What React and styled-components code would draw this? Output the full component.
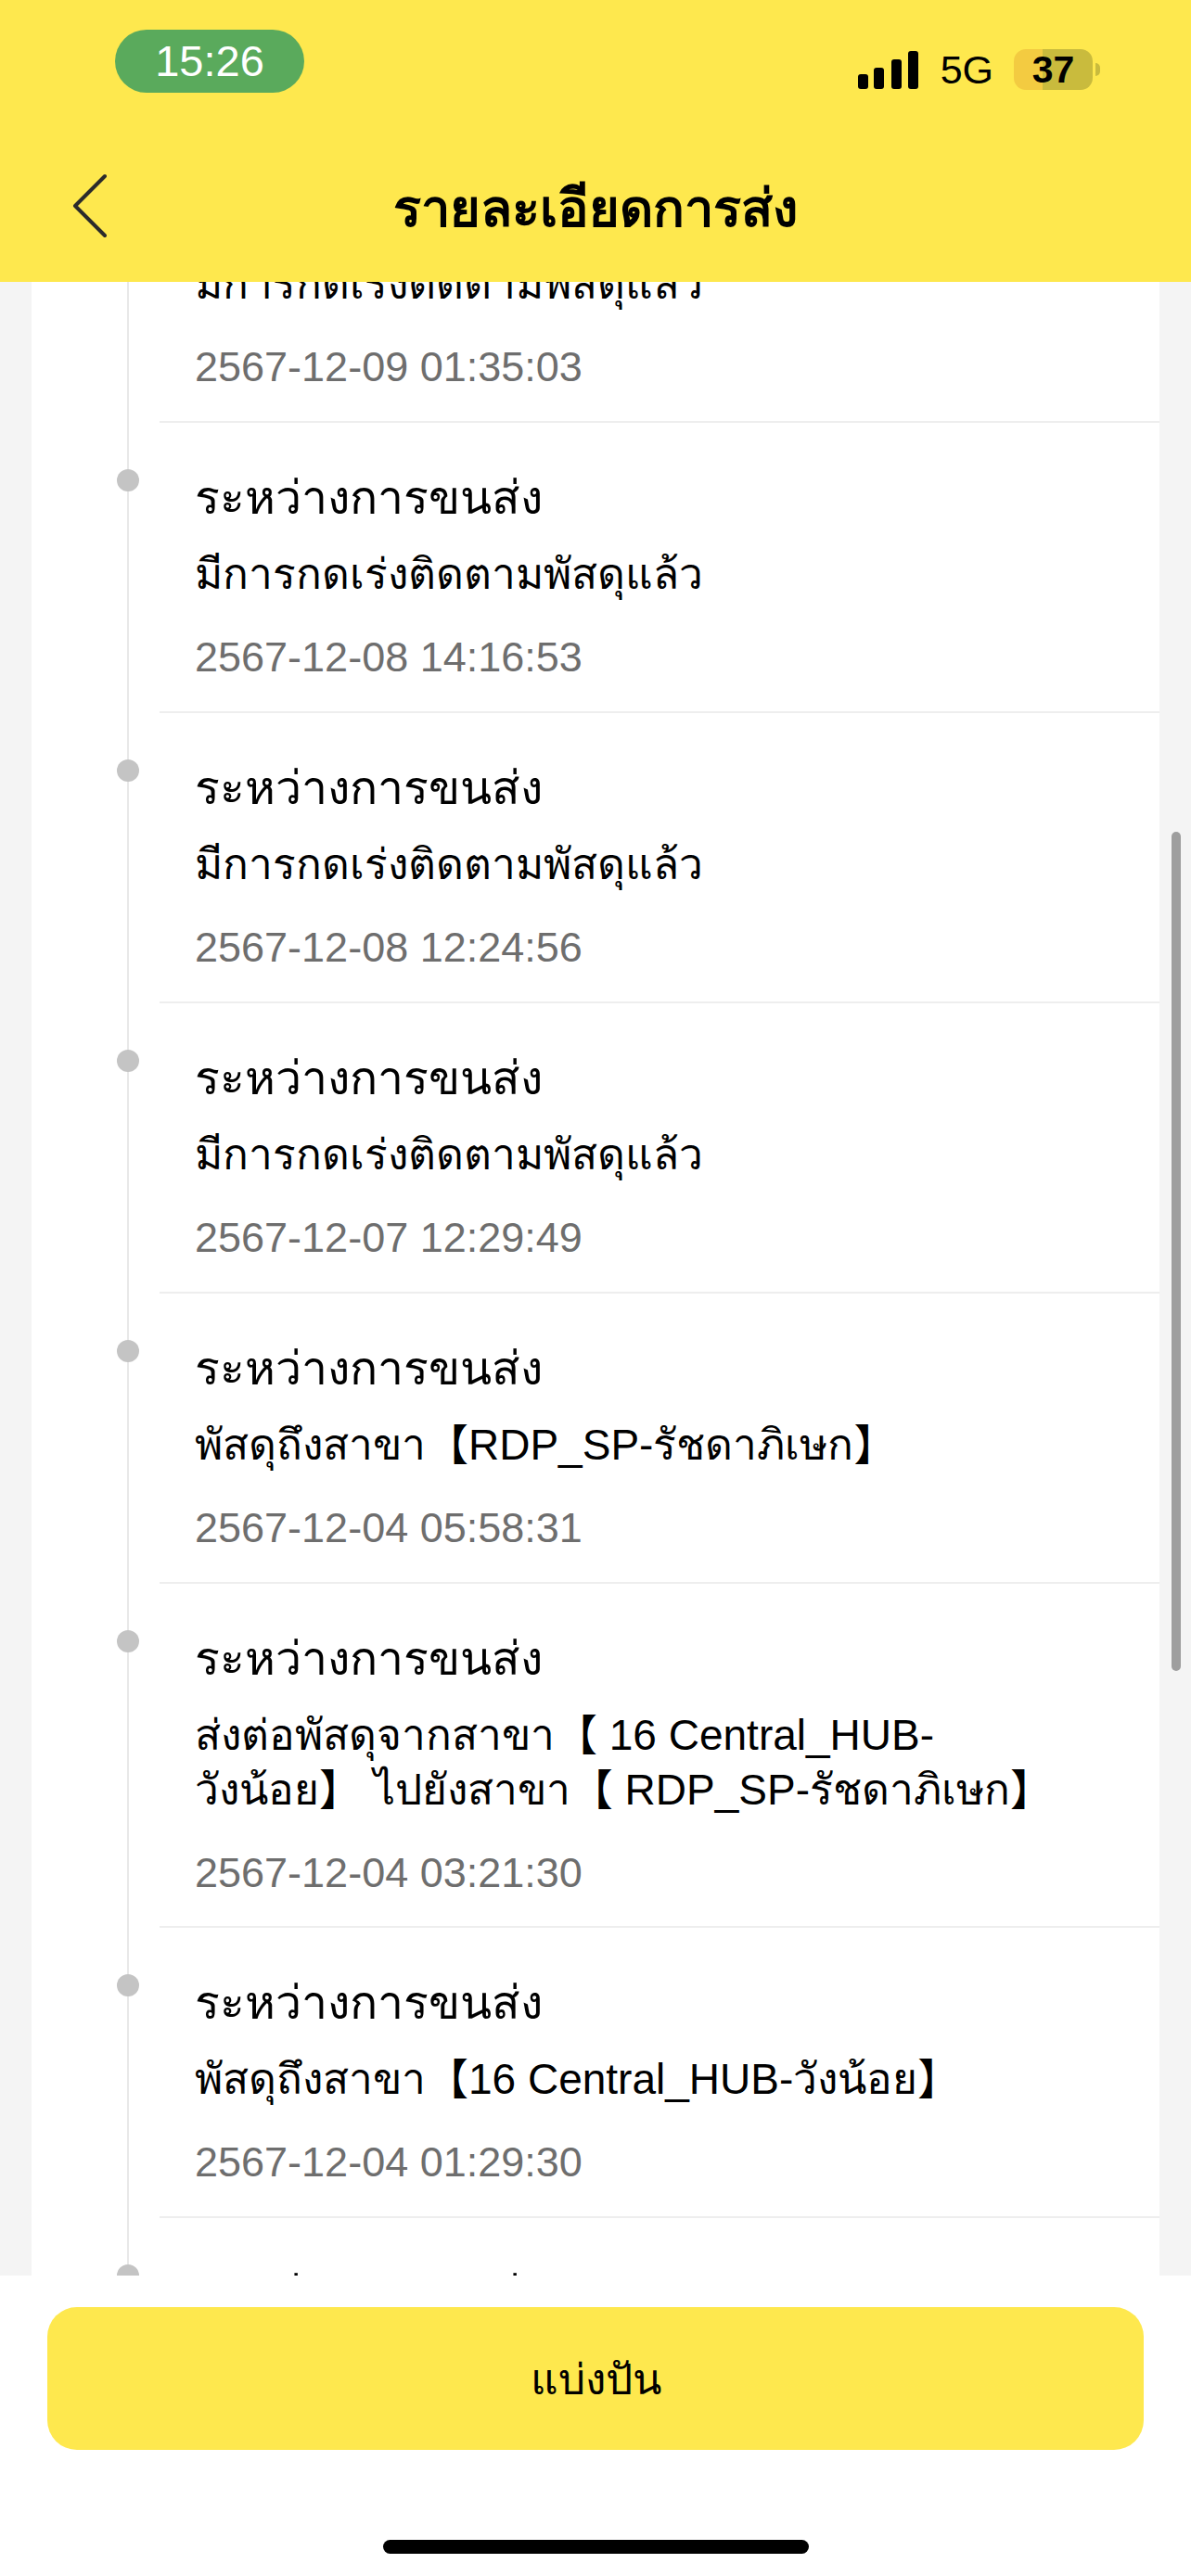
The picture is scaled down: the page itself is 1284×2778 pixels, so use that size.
import React from 'react';
import styled, { createGlobalStyle } from 'styled-components';

const GlobalStyle = createGlobalStyle`
  * {
    box-sizing: border-box;
  }

  html, body {
    margin: 0;
    padding: 0;
    background: #fff;
    font-family: "Liberation Sans", "Noto Sans", "Noto Sans CJK JP", sans-serif;
  }
`

const Page = styled.div`
  width: 1284px;
  height: 2778px;
  display: flex;
  flex-direction: column;
  overflow: hidden;
  background: #fff;
`

const Header = styled.header`
  height: 304px;
  flex: none;
  background: #fee84e;
  display: flex;
  flex-direction: column;
  position: relative;
  z-index: 2;
`

const StatusBar = styled.div`
  height: 100px;
  padding: 32px 98px 0 124px;
  display: flex;
  justify-content: space-between;
  align-items: flex-start;
`

const TimePill = styled.div`
  width: 204px;
  height: 68px;
  border-radius: 34px;
  background: #5aaa5c;
  color: #fff;
  font-size: 47px;
  line-height: 68px;
  text-align: center;
`

const StatusRight = styled.div`
  display: flex;
  align-items: center;
  height: 44px;
  margin-top: 21px;
`

const NetworkLabel = styled.span`
  font-size: 43px;
  line-height: 44px;
  margin: 0 22px 0 24px;
  color: #000;
`

const Battery = styled.div`
  width: 85px;
  height: 44px;
  border-radius: 13px;
  background: linear-gradient(to right, #f3cb41 37%, #c9bb3d 37%);
  color: #000;
  font-size: 41px;
  font-weight: 700;
  line-height: 44px;
  text-align: center;
`

const BatteryTip = styled.div`
  width: 5px;
  height: 14px;
  margin-left: 3px;
  border-radius: 0 7px 7px 0;
  background: #c9bb3d;
`

const NavBar = styled.div`
  flex: 1;
  display: flex;
  align-items: center;
  justify-content: center;
  position: relative;
  padding-top: 44px;
`

const BackButton = styled.button`
  position: absolute;
  left: 76px;
  top: 87px;
  width: 42px;
  height: 70px;
  padding: 0;
  border: 0;
  background: none;
`

const Title = styled.h1`
  margin: 0;
  font-size: 56px;
  font-weight: 700;
  color: #000;
`

const Content = styled.main`
  flex: 1;
  min-height: 0;
  overflow: hidden;
  background: #f4f4f4;
  padding: 0 34px;
  position: relative;
`

const Card = styled.div`
  background: #fff;
  margin-top: -161px;
`

const Row = styled.div`
  display: flex;
`

const Rail = styled.div`
  width: 138px;
  flex: none;
  position: relative;

  &::before {
    content: '';
    position: absolute;
    left: 103px;
    top: 0;
    bottom: 0;
    width: 2px;
    background: #e8e8e8;
  }

  &::after {
    content: '';
    position: absolute;
    left: 92px;
    top: 50px;
    width: 24px;
    height: 24px;
    border-radius: 50%;
    background: #c4c4c4;
  }
`

const RowBody = styled.div`
  flex: 1;
  min-width: 0;
  padding: 49px 100px 0 38px;
  height: ${props => props.$tall ? 371 : 313}px;
  border-bottom: 2px solid #eeeeee;
`

const RowTitle = styled.div`
  font-size: 50px;
  line-height: 64px;
  color: #000;
`

const RowText = styled.div`
  margin-top: 21px;
  font-size: 46px;
  line-height: 59px;
  color: #000;
`

const RowDate = styled.div`
  margin-top: 35px;
  font-size: 45px;
  line-height: 50px;
  color: #6e6e6e;
`

const ScrollThumb = styled.div`
  position: absolute;
  left: 1263px;
  top: 593px;
  width: 10px;
  height: 905px;
  border-radius: 5px;
  background: #9e9e9e;
`

const Footer = styled.footer`
  height: 324px;
  flex: none;
  background: #fff;
  padding-top: 34px;
  position: relative;
  z-index: 2;
  display: flex;
  flex-direction: column;
  align-items: center;
`

const ShareButton = styled.button`
  width: 1182px;
  height: 154px;
  flex: none;
  border: 0;
  border-radius: 32px;
  background: #fee84e;
  color: #000;
  font-family: inherit;
  font-size: 46px;
`

const HomeBar = styled.div`
  width: 459px;
  height: 15px;
  flex: none;
  margin-top: 97px;
  border-radius: 8px;
  background: #000;
`

const events = [
  { text: 'มีการกดเร่งติดตามพัสดุแล้ว', date: '2567-12-09 01:35:03' },
  { text: 'มีการกดเร่งติดตามพัสดุแล้ว', date: '2567-12-08 14:16:53' },
  { text: 'มีการกดเร่งติดตามพัสดุแล้ว', date: '2567-12-08 12:24:56' },
  { text: 'มีการกดเร่งติดตามพัสดุแล้ว', date: '2567-12-07 12:29:49' },
  { text: 'พัสดุถึงสาขา【RDP_SP-รัชดาภิเษก】', date: '2567-12-04 05:58:31' },
  { text: 'ส่งต่อพัสดุจากสาขา【 16 Central_HUB-วังน้อย】 ไปยังสาขา【 RDP_SP-รัชดาภิเษก】', date: '2567-12-04 03:21:30', tall: true },
  { text: 'พัสดุถึงสาขา【16 Central_HUB-วังน้อย】', date: '2567-12-04 01:29:30' },
  { text: 'พัสดุถึงสาขา【16 Central_HUB-วังน้อย】', date: '2567-12-03 22:10:12' },
];

export default function App() {
  return (
    <Page>
      <GlobalStyle />
      <Header>
        <StatusBar>
          <TimePill>15:26</TimePill>
          <StatusRight>
            <svg width="65" height="41" viewBox="0 0 65 41" fill="#000">
              <rect x="0" y="25" width="11" height="16" rx="3" />
              <rect x="17" y="18" width="11" height="23" rx="3" />
              <rect x="36" y="9" width="11" height="32" rx="3" />
              <rect x="54" y="0" width="11" height="41" rx="3" />
            </svg>
            <NetworkLabel>5G</NetworkLabel>
            <Battery>37</Battery>
            <BatteryTip />
          </StatusRight>
        </StatusBar>
        <NavBar>
          <BackButton aria-label="back">
            <svg width="42" height="70" viewBox="0 0 42 70" fill="none">
              <path d="M37 3 L5 35 L37 67" stroke="#2b2b2b" strokeWidth="4" strokeLinecap="round" strokeLinejoin="round" />
            </svg>
          </BackButton>
          <Title>รายละเอียดการส่ง</Title>
        </NavBar>
      </Header>
      <Content>
        <Card>
          {events.map(item => (
            <Row key={item.date}>
              <Rail />
              <RowBody $tall={item.tall}>
                <RowTitle>ระหว่างการขนส่ง</RowTitle>
                <RowText>{item.text}</RowText>
                <RowDate>{item.date}</RowDate>
              </RowBody>
            </Row>
          ))}
        </Card>
        <ScrollThumb />
      </Content>
      <Footer>
        <ShareButton>แบ่งปัน</ShareButton>
        <HomeBar />
      </Footer>
    </Page>
  );
}
